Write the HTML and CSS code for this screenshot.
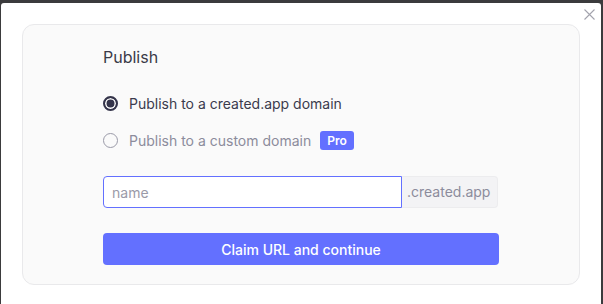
FILE: index.html
```html
<!DOCTYPE html>
<html lang="en">
    <head>
        <meta charset="UTF-8" />
        <meta name="viewport" content="width=device-width, initial-scale=1.0" />
        <title>Publish</title>
        <link rel="stylesheet" href="styles.css">
    </head>
    <body>
        <div class="modal">
            <button class="close" aria-label="Close">
                <svg width="11" height="11" viewBox="0 0 11 11">
                    <path d="M0.5 0.5 L10.5 10.5 M10.5 0.5 L0.5 10.5" stroke="#a3a3ad" stroke-width="1.1" fill="none" />
                </svg>
            </button>

            <!-- Publish card -->
            <div class="card">
                <h2 class="title">Publish</h2>

                <label class="option">
                    <input type="radio" name="target" checked />
                    <span class="radio"></span>
                    <span>Publish to a created.app domain</span>
                </label>
                <label class="option muted">
                    <input type="radio" name="target" />
                    <span class="radio"></span>
                    <span>Publish to a custom domain</span>
                    <span class="badge">Pro</span>
                </label>

                <div class="url-field">
                    <input class="url-input" type="text" placeholder="name" />
                    <span class="url-suffix">.created.app</span>
                </div>

                <button class="claim">Claim URL and continue</button>
            </div>
        </div>
    </body>
</html>
```

FILE: styles.css
```css
html,
body {
    margin: 0;
    height: 100%;
    background-color: #3b3b3d;
    font-family: "Inter", "Noto Sans", sans-serif;
    overflow: hidden;
}

.modal {
    position: relative;
    box-sizing: border-box;
    height: 301px;
    margin: 3px 2px 0 1px;
    padding: 21px 0 0 21px;
    background-color: #ffffff;
    border-radius: 3px 3px 0 0;
}

.close {
    position: absolute;
    top: 6px;
    right: 6px;
    padding: 0;
    border: none;
    background: none;
    line-height: 0;
    cursor: pointer;
}

.card {
    box-sizing: border-box;
    width: 558px;
    height: 261px;
    padding: 20px 0 0 80px;
    background-color: #fafafa;
    border: 1px solid #e9e9eb;
    border-radius: 12px;
}

.title {
    margin: 0 0 24px;
    font-size: 16px;
    font-weight: 400;
    line-height: 24px;
    color: #3a3a48;
}

.option {
    display: flex;
    align-items: center;
    height: 20px;
    margin-bottom: 17px;
    font-size: 14px;
    color: #3b3b4d;
    cursor: pointer;
}

.option.muted {
    color: #8c8c9c;
    margin-bottom: 0;
}

.option input {
    display: none;
}

.radio {
    box-sizing: border-box;
    width: 15px;
    height: 15px;
    margin-right: 11px;
    border: 1.5px solid #9a9aa8;
    border-radius: 50%;
}

.option input:checked + .radio {
    border: 2px solid #34344a;
    background-color: #34344a;
    box-shadow: inset 0 0 0 1.5px #ffffff;
}

.badge {
    margin-left: 9px;
    padding: 0 7px;
    height: 19px;
    line-height: 19px;
    font-size: 12px;
    font-weight: 600;
    color: #ffffff;
    background-color: #6370ff;
    border-radius: 3px;
}

.url-field {
    display: flex;
    height: 32px;
    margin-top: 26px;
}

.url-input {
    box-sizing: border-box;
    width: 299px;
    height: 32px;
    padding: 0 8px;
    font-family: inherit;
    font-size: 14px;
    color: #3b3b4d;
    border: 1px solid #6370ff;
    border-radius: 4px 0 0 4px;
    outline: none;
}

.url-input::placeholder {
    color: #9a9aa8;
}

.url-suffix {
    box-sizing: border-box;
    width: 96px;
    padding: 0 5px;
    line-height: 30px;
    font-size: 14px;
    color: #8c8c9c;
    background-color: #f3f3f5;
    border: 1px solid #ececee;
    border-left: none;
    border-radius: 0 4px 4px 0;
}

.claim {
    display: block;
    width: 396px;
    height: 32px;
    margin-top: 25px;
    font-family: inherit;
    font-size: 14px;
    font-weight: 500;
    color: #ffffff;
    background-color: #6370ff;
    border: none;
    border-radius: 4px;
    cursor: pointer;
}
```
